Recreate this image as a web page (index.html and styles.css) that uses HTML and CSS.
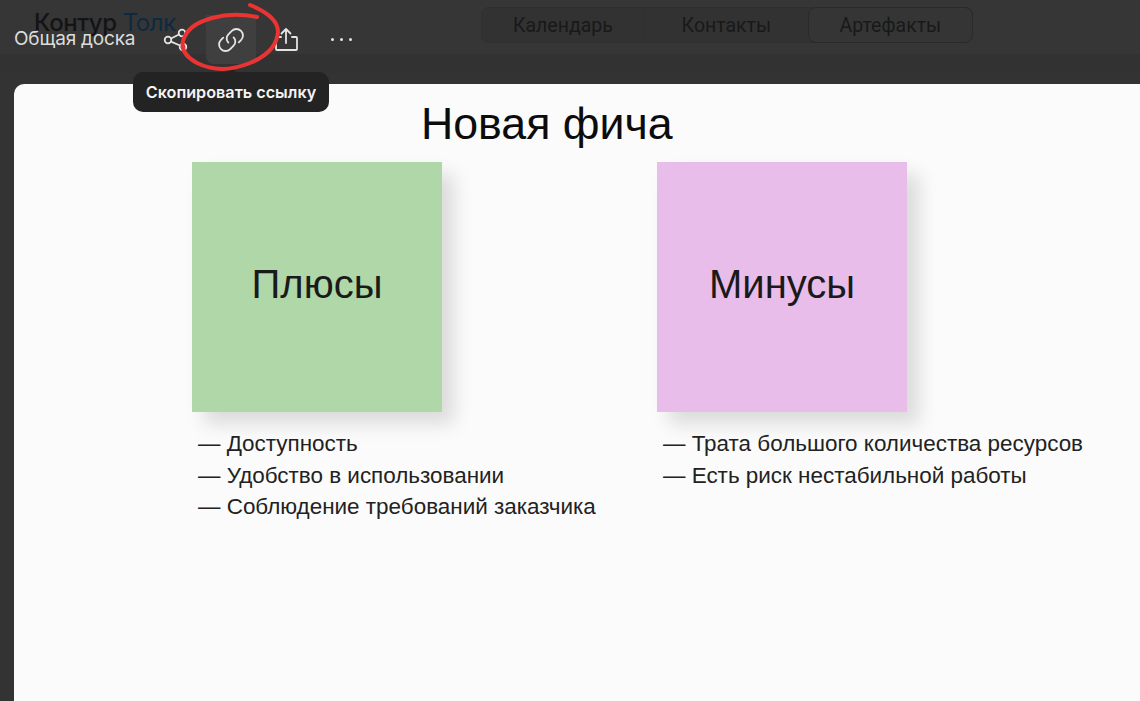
FILE: index.html
```html
<!DOCTYPE html>
<html lang="ru">

<head>
    <meta charset="UTF-8">
    <title>Контур Толк</title>
    <link rel="stylesheet" href="styles.css">
</head>

<body>
    <header class="app-header">
        <div class="logo">Контур <span class="logo-accent">Толк</span></div>
        <nav class="tabs">
            <span class="tab tab-first">Календарь</span>
            <span class="tab tab-second">Контакты</span>
            <span class="tab tab-active">Артефакты</span>
        </nav>
    </header>
    <div class="header-strip"></div>

    <div class="toolbar">
        <span class="toolbar-title">Общая доска</span>
        <button class="tool">
            <svg width="26" height="26" viewBox="0 0 26 26" fill="none" stroke="#e4e4e4" stroke-width="1.800">
                <circle cx="6" cy="13" r="3.300"></circle>
                <circle cx="20" cy="6" r="3.300"></circle>
                <circle cx="21" cy="20" r="3.300"></circle>
                <path d="M9 11.500 17 7.500M9 14.700 18 18.500"></path>
            </svg>
        </button>
        <button class="tool tool-link">
            <svg width="26" height="26" viewBox="3 3 20 20" fill="none" stroke="#e4e4e4" stroke-width="1.400" stroke-linecap="round">
                <path d="M11 15a4.500 4.500 0 0 1 0-6.400l2.600-2.600a5 5 0 0 1 7.100 7.100l-1.700 1.700"></path>
                <path d="M15 11a4.500 4.500 0 0 1 0 6.400l-2.600 2.600a5 5 0 0 1-7.100-7.100l1.700-1.700"></path>
            </svg>
        </button>
        <button class="tool">
            <svg width="26" height="26" viewBox="0 0 26 26" fill="none" stroke="#e4e4e4" stroke-width="1.800" stroke-linecap="round" stroke-linejoin="round">
                <path d="M8 10H4a1 1 0 0 0-1 1V22a1 1 0 0 0 1 1h19a1 1 0 0 0 1-1V11a1 1 0 0 0-1-1h-4"></path>
                <path d="M13 16V2M8.500 6.500 13 2 17.500 6.500"></path>
            </svg>
        </button>
        <button class="tool tool-more">
            <span class="dot"></span>
            <span class="dot"></span>
            <span class="dot"></span>
        </button>
    </div>

    <div class="tooltip">Скопировать ссылку</div>

    <main class="board">
        <h1 class="board-title">Новая фича</h1>
        <div class="columns">
            <section class="column">
                <div class="sticky sticky-green">Плюсы</div>
                <ul class="notes">
                    <li>— Доступность</li>
                    <li>— Удобство в использовании</li>
                    <li>— Соблюдение требований заказчика</li>
                </ul>
            </section>
            <section class="column">
                <div class="sticky sticky-pink">Минусы</div>
                <ul class="notes">
                    <li>— Трата большого количества ресурсов</li>
                    <li>— Есть риск нестабильной работы</li>
                </ul>
            </section>
        </div>
    </main>

    <svg class="scribble" width="300" height="90" viewBox="0 0 300 90" fill="none" stroke="#ea3433" stroke-width="4" stroke-linecap="round" stroke-linejoin="round">
        <path d="M100 5C115 11 128 20 128 32C127 45 117 56 100 63C85 69 65 72 47 63C36 57 31 50 33 41C36 30 47 22 62 18C77 14 92 14 107 17"></path>
    </svg>
</body>

</html>
```

FILE: styles.css
```css
* {
    padding: 0;
    margin: 0;
    box-sizing: border-box;
}

body {
    width: 100%;
    height: 100vh;
    position: relative;
    overflow: hidden;
    background: #333333;
    font-family: Inter, "Noto Sans", sans-serif;
    display: flex;
    flex-direction: column;
}

/* dimmed app behind the board */

.app-header {
    height: 54px;
    flex-shrink: 0;
    background: #363636;
    display: flex;
    align-items: flex-start;
}

.logo {
    margin: 9px 0 0 34px;
    font-size: 24px;
    line-height: 28px;
    font-weight: 500;
    color: #141414;
    letter-spacing: -0.4px;
}

.logo-accent {
    font-weight: 400;
    color: #0d2a40;
}

.tabs {
    margin: 7px 0 0 305px;
    width: 492px;
    height: 36px;
    display: flex;
    border-radius: 8px;
    background: #323232;
    border: 1px solid #2f2f2f;
    font-family: Roboto, sans-serif;
    font-size: 19.500px;
    color: #191919;
}

.tab {
    display: flex;
    align-items: center;
    justify-content: center;
}

.tab-first {
    width: 163px;
    border-right: 1px solid #2f2f2f;
}

.tab-second {
    width: 163px;
}

.tab-active {
    width: 165px;
    margin: -1px -1px -1px auto;
    height: 36px;
    border: 1px solid #2a2a2a;
    border-radius: 8px;
    background: #353535;
}

.header-strip {
    height: 19px;
    flex-shrink: 0;
    background: #323232;
}

/* toolbar over the dimmed header */

.toolbar {
    position: absolute;
    top: 15px;
    left: 14px;
    display: flex;
    align-items: flex-start;
    gap: 5.500px;
}

.toolbar-title {
    font-size: 19px;
    line-height: 48px;
    color: #dcdcdc;
    letter-spacing: -0.2px;
    width: 130.500px;
    white-space: nowrap;
}

.tool {
    border: 0;
    background: none;
    width: 50px;
    height: 49px;
    display: flex;
    align-items: center;
    justify-content: center;
}

.tool-link {
    background: #3f3f3f;
    border-radius: 0 0 8px 8px;
}

.tool-more {
    gap: 5.500px;
}

.dot {
    width: 3.500px;
    height: 3.500px;
    border-radius: 50%;
    background: #e4e4e4;
}

.tooltip {
    position: absolute;
    top: 72px;
    left: 133px;
    width: 196px;
    height: 40px;
    border-radius: 10px;
    background: #232323;
    color: #f4f4f4;
    font-size: 16.200px;
    font-weight: 600;
    line-height: 40px;
    text-align: center;
    z-index: 2;
}

.tooltip::before {
    content: "";
    position: absolute;
    top: -5px;
    left: 93px;
    border: 5px solid transparent;
    border-top: 0;
    border-bottom-color: #232323;
}

/* board */

.board {
    margin: 11px 0 0 14px;
    flex: 1;
    background: #fbfbfb;
    border-radius: 10px 0 0 0;
    font-family: "Liberation Sans", Arial, sans-serif;
    color: #1a1a1a;
}

.board-title {
    margin: 14px 0 0 407px;
    font-size: 44.700px;
    line-height: 52px;
    font-weight: 400;
    color: #0c0c0c;
}

.columns {
    margin: 12px 0 0 178px;
    display: flex;
    gap: 215px;
}

.column {
    width: 250px;
}

.sticky {
    width: 250px;
    height: 250px;
    display: flex;
    align-items: center;
    justify-content: center;
    font-size: 40px;
    padding-bottom: 6px;
    box-shadow: 12px 12px 18px rgba(0, 0, 0, 0.13);
}

.sticky-green {
    background: #b0d7a8;
}

.sticky-pink {
    background: #e9bdea;
}

.notes {
    list-style: none;
    margin: 16px 0 0 6px;
    width: 440px;
    font-size: 22.450px;
    line-height: 31.500px;
    color: #222;
}

/* hand drawn mark */

.scribble {
    position: absolute;
    top: 0;
    left: 150px;
    z-index: 3;
}
```
